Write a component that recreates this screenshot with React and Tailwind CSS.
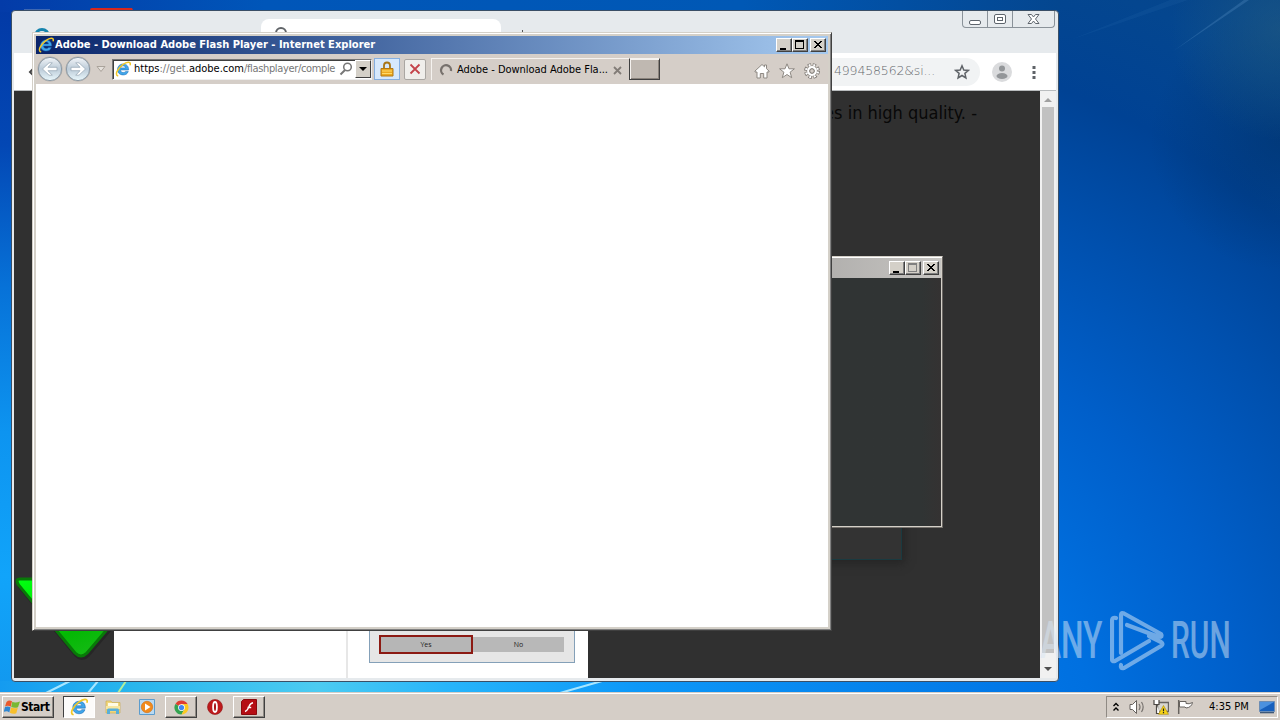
import clsx from 'clsx';

const IeLogo = ({ className }) => (
  <svg viewBox="0 0 16 16" className={className}>
    <path d="M13.6 9H5.500C5.700 10.700 6.700 11.500 8.200 11.500c1.100 0 1.900-.4 2.300-1.100h2.800c-.7 2.200-2.600 3.600-5.200 3.600-3.300 0-5.600-2.200-5.600-5.500S4.900 2.900 8.100 2.900c3.500 0 5.700 2.400 5.500 6.100zM5.600 6.900h4.900C10.300 5.500 9.500 4.900 8.200 4.900S6 5.500 5.600 6.900z" fill="#3fa6ea" stroke="#1668b4" strokeWidth=".5" />
    <path d="M2.600 14.700C-.4 13.600 2.800 7.400 7.800 3.700 11.800.7 15.900.2 15.200 3.700" fill="none" stroke="#f1c727" strokeWidth="1.500" strokeLinecap="round" />
  </svg>
);

const NavArrow = ({ flip }) => (
  <svg viewBox="0 0 28 28" className={clsx('w-7 h-7 shrink-0', flip && '-scale-x-100')}>
    <defs>
      <linearGradient id="nav" x1="0" y1="0" x2="0" y2="1">
        <stop offset="0" stopColor="#f2f5f8" />
        <stop offset=".5" stopColor="#bccbd8" />
        <stop offset="1" stopColor="#eaf8fc" />
      </linearGradient>
    </defs>
    <circle cx="14" cy="14" r="12.500" fill="#b5b0ab" />
    <circle cx="14" cy="14" r="11.600" fill="url(#nav)" stroke="#8c9aa6" />
    <path d="M6.500 14l6.500-6.200h3.300L12 12.300h9v3.400h-9l4.300 4.500H13z" fill="#fff" stroke="#9aabb9" strokeWidth=".8" />
  </svg>
);

const ClassicButton = ({ kind, disabled }) => (
  <div className="w-4 h-[14px] bg-[#d4d0c8] border border-t-white border-l-white border-r-[#404040] border-b-[#404040] shadow-[inset_-1px_-1px_#808080]">
    <svg viewBox="0 0 14 12" className="block w-[14px] h-3" shapeRendering="crispEdges">
      {kind === 'min' && <path d="M3 9h6v2H3z" fill="#000" />}
      {kind === 'max' && <path d="M2 1h9v9H2zM3 3v6h7V3z" fillRule="evenodd" fill={disabled ? '#808080' : '#000'} />}
      {kind === 'close' && <path d="M3 2h2v1h1v1h2V3h1V2h2v1h-1v1H9v1H8v1h1v1h1v1h1v1H9V8H8V7H6v1H5v1H3V8h1V7h1V6h1V5H5V4H4V3H3z" fill="#000" />}
    </svg>
  </div>
);

const WindowButtons = ({ disabled }) => (
  <div className="flex items-center">
    <ClassicButton kind="min" />
    <ClassicButton kind="max" disabled={disabled} />
    <div className="w-[2px]" />
    <ClassicButton kind="close" />
  </div>
);

const Wallpaper = () => (
  <svg viewBox="0 0 1280 720" className="absolute inset-0 w-full h-full">
    <defs>
      <radialGradient id="glow" gradientUnits="userSpaceOnUse" cx="800" cy="760" r="900">
        <stop offset="0" stopColor="#0084f4" />
        <stop offset=".33" stopColor="#0070e0" />
        <stop offset=".5" stopColor="#005fca" />
        <stop offset=".66" stopColor="#0050ae" />
        <stop offset=".8" stopColor="#004294" />
        <stop offset=".92" stopColor="#04468f" />
        <stop offset="1" stopColor="#064488" />
      </radialGradient>
      <linearGradient id="left" x1="0" y1="0" x2="0" y2="1">
        <stop offset="0" stopColor="#0239a5" />
        <stop offset=".2" stopColor="#0347b4" />
        <stop offset=".4" stopColor="#0772d8" />
        <stop offset=".6" stopColor="#0d94f0" />
        <stop offset=".8" stopColor="#11a4fa" />
        <stop offset="1" stopColor="#1295ec" />
      </linearGradient>
      <linearGradient id="top">
        <stop offset="0" stopColor="#033ba8" />
        <stop offset=".25" stopColor="#0056b9" />
        <stop offset=".7" stopColor="#0058b5" />
        <stop offset="1" stopColor="#04468f" />
      </linearGradient>
      <linearGradient id="bottom">
        <stop offset="0" stopColor="#149bf0" />
        <stop offset=".12" stopColor="#28b5ed" />
        <stop offset=".3" stopColor="#4ccbf1" />
        <stop offset=".42" stopColor="#28b5fa" />
        <stop offset=".6" stopColor="#0d98f8" />
        <stop offset="1" stopColor="#0073e4" />
      </linearGradient>
      <radialGradient id="haze" gradientUnits="userSpaceOnUse" cx="1280" cy="30" r="110">
        <stop offset="0" stopColor="#2b6480" stopOpacity=".45" />
        <stop offset="1" stopColor="#2b6480" stopOpacity="0" />
      </radialGradient>
      <radialGradient id="shade" gradientUnits="userSpaceOnUse" cx="1280" cy="140" r="130">
        <stop offset="0" stopColor="#002f66" stopOpacity=".5" />
        <stop offset="1" stopColor="#002f66" stopOpacity="0" />
      </radialGradient>
    </defs>
    <path d="M0 0h1280v720H0z" fill="url(#glow)" />
    <path d="M0 0h600v720H0z" fill="url(#left)" />
    <path d="M0 0h1060v12H0z" fill="url(#top)" />
    <path d="M0 681h1060v14H0z" fill="url(#bottom)" />
    <path d="M1060 0h220v280h-220z" fill="url(#shade)" />
    <path d="M1060 0h220v180h-220z" fill="url(#haze)" />
    <path d="M1172 52L1244 0h5z" fill="#5a93c8" opacity=".3" />
    <path d="M1070 40L1170 0h18z" fill="#3c7dbc" opacity=".12" />
    <path d="M46 693L70 681M88 693l10-12M560 693l42-12" stroke="#a8e6ff" strokeWidth="2" />
    <path d="M118 693l8-12" stroke="#b4ee9c" strokeWidth="2" />
    <path d="M90 10q0-2 2-2h40l2 4H90z" fill="#d8281e" />
    <path d="M24 9.500h26V11H24z" fill="#7d93b8" />
  </svg>
);

const ChromeWindow = () => (
  <div className="absolute left-[11px] top-[10px] w-[1048px] h-[672px] flex flex-col bg-[#e6eaed] border border-[#3a4f66] rounded px-[2px] pb-[3px]">
    <div className="h-[42px] flex shrink-0">
      <div className="w-[247px] flex pl-5 pt-[17px]">
        <div className="w-4 h-4 rounded-full border-[3px] border-[#1583ad]" />
      </div>
      <div className="w-[240px] mt-2 bg-white rounded-t-lg pl-[14px] pt-2">
        <div className="w-3 h-3 rounded-full border-2 border-[#606468]" />
      </div>
      <div className="ml-[21px] mt-[19px] w-px h-3 bg-[#555]" />
      <div className="ml-auto mr-px flex h-[17px] w-[93px] border border-t-0 border-[#8a9299] rounded-b">
        <div className="w-[25px] border-r border-[#8a9299] flex justify-center pt-[9px]">
          <div className="w-3 h-[5px] border border-[#5e656d] rounded-[2px] bg-white" />
        </div>
        <div className="w-[25px] border-r border-[#8a9299] flex justify-center pt-[3px]">
          <div className="w-3 h-[10px] border border-[#5e656d] rounded-[2px] bg-white p-[2px]">
            <div className="w-full h-full border border-[#5e656d]" />
          </div>
        </div>
        <svg viewBox="0 0 41 16" className="w-[41px] h-4">
          <path d="M15 3.500h3.500l2 2.500 2-2.500H26L22.500 8l3.500 4.500h-3.500l-2-2.500-2 2.500H15L18.500 8z" fill="#fff" stroke="#5e656d" />
        </svg>
      </div>
    </div>
    <div className="h-[38px] shrink-0 flex items-center bg-white border-b border-[#b9bcbe]">
      <svg viewBox="0 0 8 8" className="w-2 h-2 ml-[14px]"><path d="M6 0L2 4l4 4" fill="none" stroke="#444" strokeWidth="2" /></svg>
      <div className="ml-[70px] w-[874px] h-7 rounded-full bg-[#f1f3f4] flex items-center justify-end pr-[10px]">
        <span className="font-['DejaVu_Sans'] font-extralight text-[12.500px] tracking-[-0.150px] text-[#66696e] mr-[19px] whitespace-nowrap">499458562&si...</span>
        <svg viewBox="0 0 16 16" className="w-4 h-4"><path d="M8 1.800l1.800 4.200 4.600.4-3.500 3 1 4.500L8 11.500l-3.900 2.400 1-4.500-3.500-3L6.200 6z" fill="none" stroke="#5f6368" strokeWidth="1.500" /></svg>
      </div>
      <svg viewBox="0 0 20 20" className="w-5 h-5 ml-3">
        <circle cx="10" cy="10" r="10" fill="#dadbdd" />
        <circle cx="10" cy="6.500" r="3" fill="#939699" />
        <ellipse cx="10" cy="14" rx="5.500" ry="3" fill="#939699" />
      </svg>
      <svg viewBox="0 0 4 14" className="w-1 h-[14px] ml-5"><path d="M.5 1h3v3h-3zM.5 6h3v3h-3zM.5 11h3v3h-3z" fill="#5f6368" /></svg>
    </div>
    <div className="flex-1 min-h-0 flex">
      <div className="relative w-[1026px] bg-[#303030] flex flex-col justify-between overflow-hidden">
        <p className="self-end mr-[63px] mt-[9px] font-['DejaVu_Sans_Condensed','DejaVu_Sans'] font-stretch-condensed text-[18px] leading-[26px] text-[#080808] whitespace-nowrap">See movies in high quality. -</p>
        <div className="absolute left-[600px] top-[400px] w-[288px] h-[69px] bg-[#333] border-r border-b border-[#1a3a40] shadow-[3px_4px_8px_#262626]" />
        <svg viewBox="0 0 100 110" className="absolute left-0 bottom-0 w-[100px] h-[110px]">
          <defs>
            <linearGradient id="green" x1=".1" x2=".6" y2="1">
              <stop offset="0" stopColor="#00ff10" />
              <stop offset=".5" stopColor="#05dc05" />
              <stop offset=".75" stopColor="#04b804" />
              <stop offset="1" stopColor="#12ba12" />
            </linearGradient>
          </defs>
          <path d="M7 14H92L97 60 74 87Q68 93 62 87L6 19Q3 13 8 13z" fill="none" stroke="#1c1c1c" strokeWidth="4" opacity=".5" />
          <path d="M6 11H92L96 58 73 85Q67 91 61 85L4.500 17Q1 11 6 11z" fill="url(#green)" stroke="#087a08" strokeWidth="3" />
        </svg>
        <div className="ml-[100px] h-[60px] w-[474px] bg-white flex">
          <div className="w-[232px]" />
          <div className="w-[2px] bg-[#e7e7e7]" />
          <div className="ml-[21px] h-[45px] w-[206px] bg-[#e6e6e6] border border-t-0 border-[#84a0b8] flex items-end pb-2 pl-[9px] text-center font-['Open_Sans'] text-[7px] text-[#222]">
            <div className="w-[94px] h-[19px] border-2 border-[#8c1a13] bg-[#b6b6b6] leading-[15px]">Yes</div>
            <div className="w-[91px] h-[15px] mb-[2px] bg-[#b8b8b8] leading-[15px]">No</div>
          </div>
        </div>
      </div>
      <div className="w-4 flex flex-col items-center bg-[#f1f1f1]">
        <svg viewBox="0 0 16 16" className="w-4 h-4"><path d="M4 11l4-4 4 4z" fill="#a0a0a0" /></svg>
        <div className="w-3 flex-1 bg-[#c1c1c1] mb-[9px]" />
        <svg viewBox="0 0 16 16" className="w-4 h-4"><path d="M4 5l4 4 4-4z" fill="#505050" /></svg>
      </div>
    </div>
  </div>
);

const DarkDialog = () => (
  <div className="absolute left-[543px] top-[256px] w-[400px] h-[272px] border border-[#d4d0c8] border-r-[#6a6663] border-b-[#77736e] bg-[#d4d0c8] shadow-[inset_1px_1px_#fff] p-px flex flex-col">
    <div className="h-[20px] shrink-0 bg-linear-to-r from-[#808080] to-[#c6c4c1] flex items-center justify-end pr-[2px]">
      <WindowButtons disabled />
    </div>
    <div className="flex-1 bg-linear-to-r from-[#303434] from-95% to-[#343232]" />
  </div>
);

const IeWindow = () => (
  <div className="absolute left-8 top-8 w-[800px] h-[599px] bg-[#d4d0c8] border border-[#d4d0c8] border-r-[#404040] border-b-[#404040] shadow-[inset_1px_1px_#fff,inset_-1px_-1px_#808080] p-[3px] flex flex-col font-['DejaVu_Sans_Condensed','DejaVu_Sans'] font-stretch-condensed text-[11px] text-black">
    <div className="h-[18px] shrink-0 flex items-center justify-between bg-linear-to-r from-[#0a246a] to-[#a6caf0] pl-[2px] pr-[2px]">
      <div className="flex items-center">
        <IeLogo className="w-4 h-4" />
        <span className="ml-px pt-px font-bold text-[11.050px] text-white whitespace-nowrap">Adobe - Download Adobe Flash Player - Internet Explorer</span>
      </div>
      <WindowButtons />
    </div>
    <div className="h-[30px] shrink-0 flex items-center bg-[#d5cec8]">
      <NavArrow />
      <NavArrow flip />
      <svg viewBox="0 0 10 8" className="w-[10px] h-2 ml-1"><path d="M1 1.500h8l-4 5z" fill="#e5e1dc" stroke="#aaa39b" /></svg>
      <div className="ml-[6px] w-[260px] h-[21px] border border-[#777] border-r-[#eee] border-b-[#eee] shadow-[inset_1px_1px_#404040] bg-white flex items-center pl-[2px]">
        <IeLogo className="w-4 h-4 shrink-0" />
        <div className="ml-[3px] w-[203px] pt-px whitespace-nowrap text-[#777]">
          <span className="text-black">https</span>://get.<span className="text-black">adobe.com</span><span className="tracking-[-0.350px]">/flashplayer/comple</span>
        </div>
        <svg viewBox="0 0 14 14" className="w-[14px] h-[14px] ml-[3px] shrink-0"><circle cx="8.500" cy="5" r="3.800" fill="none" stroke="#777" strokeWidth="1.500" /><path d="M6 8l-4.500 4.500" stroke="#777" strokeWidth="2" /></svg>
        <div className="ml-[2px] w-[16px] h-[18px] shrink-0 bg-[#d4d0c8] border border-t-white border-l-white border-r-[#404040] border-b-[#404040] flex items-center justify-center">
          <svg viewBox="0 0 8 4" className="w-2 h-1"><path d="M0 0h8L4 4z" /></svg>
        </div>
      </div>
      <div className="ml-[2px] w-[26px] h-[22px] bg-[#d6e8fc] border border-[#86afe0] flex items-center justify-center">
        <svg viewBox="0 0 14 16" className="w-[14px] h-4">
          <path d="M4 8V4.500a3 3 0 016 0V8" fill="none" stroke="#a87515" strokeWidth="1.800" />
          <path d="M1 7.500h12V15H1z" fill="#eda920" stroke="#b27814" />
          <path d="M2 10h10M2 12.500h10" stroke="#ffda6b" />
        </svg>
      </div>
      <div className="ml-1 w-[22px] h-[21px] bg-[#f0eeeb] border border-[#aaa6a2] rounded-[2px] flex items-center justify-center">
        <svg viewBox="0 0 12 12" className="w-3 h-3"><path d="M1.500 1.500l9 9M10.500 1.500l-9 9" stroke="#c4434a" strokeWidth="1.800" /></svg>
      </div>
      <div className="ml-[5px] w-[198px] h-[22px] border-t border-l border-[#f5f2ef] flex items-center pl-[7px]">
        <svg viewBox="0 0 14 14" className="w-[14px] h-[14px] shrink-0"><path d="M4.500 11.500A5 5 0 1112 8" fill="none" stroke="#77716d" strokeWidth="2.300" /></svg>
        <span className="ml-[4px] pt-px whitespace-nowrap tracking-[-0.030px]">Adobe - Download Adobe Fla...</span>
        <svg viewBox="0 0 9 9" className="w-[9px] h-[9px] ml-[5px] mt-px shrink-0"><path d="M1 1l7 7M8 1L1 8" stroke="#827c77" strokeWidth="1.800" /></svg>
      </div>
      <div className="w-[31px] h-[22px] bg-[#bfb8b1] border border-[#404040] border-t-[#f5f2ef] shadow-[inset_1px_1px_#f5f2ef,inset_-1px_-1px_#8a837c]" />
      <div className="ml-auto mr-[8px] mt-[3px] flex gap-[9px] items-center">
        <svg viewBox="0 0 16 16" className="w-4 h-4"><path d="M1 8l7-6.500 2.500 2.300V2h2v3.700L15 8v1h-2v6H9.700v-4.500H6.300V15H3V9H1z" fill="#fff" stroke="#8d8882" /></svg>
        <svg viewBox="0 0 16 16" className="w-4 h-4"><path d="M8 .8l2 5h5.400l-4.300 3.400 1.600 5.500L8 11.500l-4.700 3.200 1.600-5.500L.6 5.800H6z" fill="#fff" stroke="#8d8882" /></svg>
        <svg viewBox="0 0 16 16" className="w-4 h-4">
          <circle cx="8" cy="8" r="6.300" fill="none" stroke="#7d7873" strokeWidth="3.200" strokeDasharray="3.200 1.750" />
          <circle cx="8" cy="8" r="5.600" fill="#8d8882" />
          <circle cx="8" cy="8" r="3.700" fill="none" stroke="#fff" strokeWidth="2.400" />
          <circle cx="8" cy="8" r="6" fill="none" stroke="#fff" strokeWidth="2.200" strokeDasharray="1.800 2.910" strokeDashoffset="-.7" />
          <circle cx="8" cy="8" r="2.300" fill="#d5cec8" stroke="#7d7873" />
        </svg>
      </div>
    </div>
    <div className="flex-1 bg-white" />
  </div>
);

const TaskButton = ({ open, active, children }) => (
  <div className={clsx(
    'h-[22px] w-8 flex items-center justify-center',
    open && !active && 'border border-t-white border-l-white border-r-[#404040] border-b-[#404040] shadow-[inset_-1px_-1px_#8f8a84]',
    active && 'bg-[#fcfbfa] border border-t-[#404040] border-l-[#404040] border-r-white border-b-white',
  )}>
    {children}
  </div>
);

const Taskbar = () => (
  <div className="absolute left-0 bottom-0 w-full h-[28px] bg-[#d5cec7] border-t border-[#d5cec7] shadow-[inset_0_1px_#fff] flex items-center pl-[2px] pt-px font-['DejaVu_Sans_Condensed','DejaVu_Sans'] font-stretch-condensed text-[11px] text-black">
    <div className="w-[52px] h-[22px] border border-t-white border-l-white border-r-[#404040] border-b-[#404040] shadow-[inset_-1px_-1px_#8f8a84] flex items-center pl-px">
      <svg viewBox="0 0 16 16" className="w-4 h-4 shrink-0">
        <path d="M2.500 3Q5 .5 8 2.300L6.700 7.700Q4 6 1 7.500z" fill="#e9592b" />
        <path d="M8.300 2.800Q11 4.500 16 2.500L14 8.200Q10.500 9.500 7.200 8z" fill="#78b833" />
        <path d="M1 8Q3.500 6.700 6.500 8.200L5.300 13.500Q3 11.500 -.300 13z" fill="#2e86d1" />
        <path d="M7 8.500Q10.500 10 13.800 8.800L12.300 14.200Q9 15.500 5.900 13.800z" fill="#f8bf2b" />
      </svg>
      <span className="pl-px font-bold text-[12px] tracking-[-0.450px]">Start</span>
    </div>
    <div className="ml-[9px] flex gap-[2px]">
      <TaskButton open active><IeLogo className="w-[18px] h-[18px]" /></TaskButton>
      <TaskButton>
        <svg viewBox="0 0 16 16" className="w-4 h-4">
          <path d="M1 2h5l1 1.500h8V14H1z" fill="#f0d67c" stroke="#c9a947" strokeWidth=".6" />
          <path d="M3 4h10v5H3z" fill="#fffbe4" />
          <path d="M1 7h14v3H1z" fill="#f7e6a0" />
          <path d="M2 15v-4q0-1.500 1.500-1.500h9Q14 9.500 14 11v4h-3v-3H5v3z" fill="#59afd8" />
        </svg>
      </TaskButton>
      <TaskButton>
        <svg viewBox="0 0 16 16" className="w-4 h-4">
          <path d="M.5.500h15v15H.5z" fill="#b9d9f1" stroke="#5c9ccd" />
          <circle cx="8" cy="8" r="5.700" fill="#f18a1c" stroke="#d36c0b" strokeWidth=".6" />
          <path d="M6 4.500v7L11.500 8z" fill="#fff" />
        </svg>
      </TaskButton>
      <TaskButton open>
        <svg viewBox="0 0 16 16" className="w-[15px] h-[15px]">
          <path d="M8 8L1.500 4.200A7.500 7.500 0 0114.500 4.300H8z" fill="#df3d31" />
          <path d="M8 8L1.500 4.200A7.500 7.500 0 008 15.500L11 10z" fill="#34a350" />
          <path d="M8 15.500A7.500 7.500 0 0014.500 4.300H8L11 10z" fill="#fbc921" />
          <circle cx="8" cy="8" r="3.600" fill="#fff" />
          <circle cx="8" cy="8" r="2.800" fill="#4286f0" />
        </svg>
      </TaskButton>
      <TaskButton>
        <svg viewBox="0 0 16 16" className="w-4 h-4">
          <circle cx="8" cy="8" r="7.500" fill="#be1a1c" stroke="#8e1012" strokeWidth=".6" />
          <ellipse cx="8" cy="8" rx="1.900" ry="5" fill="#a81416" stroke="#fff" strokeWidth="1.800" />
        </svg>
      </TaskButton>
      <TaskButton open>
        <svg viewBox="0 0 16 16" className="w-4 h-4">
          <path d="M.5 2.500l2-2h13v15H.5z" fill="#b60e14" stroke="#8a0a0e" />
          <path d="M4 12.500c2-.5 3-2.500 4-5s2-3.500 4-3.800M6.500 8.500h3.700" fill="none" stroke="#fff" strokeWidth="1.400" />
        </svg>
      </TaskButton>
    </div>
    <div className="ml-auto mr-[2px] w-[172px] h-[22px] border border-[#8f8a84] border-r-white border-b-white flex items-center pl-[5px]">
      <svg viewBox="0 0 8 10" className="w-2 h-[10px]"><path d="M1.500 4L4 1.500 6.500 4M1.500 8.500L4 6l2.500 2.500" fill="none" stroke="#000" strokeWidth="1.400" /></svg>
      <svg viewBox="0 0 16 16" className="w-4 h-4 ml-[9px]">
        <path d="M1 5.500h2.500l4-4v13l-4-4H1z" fill="#fff" stroke="#66625e" />
        <path d="M10 5q2 3 0 6M12.500 3q3.300 5 0 10" fill="none" stroke="#77736f" strokeWidth="1.200" />
      </svg>
      <svg viewBox="0 0 16 16" className="w-4 h-4 ml-2">
        <path d="M4.500 3.500h11v9h-11z" fill="#d8d6d0" stroke="#67635f" strokeWidth="1.400" />
        <path d="M1 1v4.500h5V1M3.500 5.500v9H7" fill="#fff" stroke="#4c4845" strokeWidth="1.200" />
        <path d="M10.500 6.500l5 8.800h-10z" fill="#f7d417" stroke="#aa8807" strokeWidth=".6" />
        <path d="M10.500 9.500v2.800M10.500 13v1.200" stroke="#222" strokeWidth="1.200" />
      </svg>
      <svg viewBox="0 0 16 16" className="w-4 h-4 ml-2">
        <path d="M2.500 2.500H9V4.500q3 1 6.500-1-1 5-6.500 5.500l-1-1H2.500z" fill="#fff" stroke="#67635f" />
        <path d="M1.700 1v14" stroke="#67635f" strokeWidth="1.500" />
      </svg>
      <span className="ml-[16px] pt-px w-[40px] whitespace-nowrap">4:35 PM</span>
      <svg viewBox="0 0 16 14" className="w-4 h-[14px] ml-[10px]">
        <path d="M.5 1.500h15v10H.5z" fill="#1760bd" stroke="#6c8db4" />
        <path d="M1 2h14L1 10z" fill="#4b91df" />
        <path d="M1 12h14v1.300H1z" fill="#3e5878" />
      </svg>
    </div>
  </div>
);

const Watermark = () => (
  <div className="absolute left-[1040px] top-[610px] h-[62px] w-[192px] flex items-center opacity-50 font-[Roboto] text-[52px] leading-none text-[#d8e6f4]">
    <div className="w-[70px]"><span className="inline-block origin-left font-medium scale-x-[.61]">ANY</span></div>
    <svg viewBox="0 0 56 62" className="w-14 h-[62px] shrink-0" fill="none" stroke="#dceaf8" strokeWidth="4.200" strokeLinejoin="round" strokeLinecap="round">
      <path d="M6 8Q2 7 2 11v38q0 3 3 2L39 31" />
      <path d="M11 43V5q0-3 3-1.500L51 24q2 3-2 3L17 15" />
      <path d="M39 26l12 6q3 2 0 4L14 58q-4 1-3-3" />
    </svg>
    <div className="ml-[5px]"><span className="inline-block origin-left font-medium scale-x-[.575]">RUN</span></div>
  </div>
);

const App = () => {
  return (
    <div className="relative w-[1280px] h-[720px] overflow-hidden bg-[#0056bd]">
      <Wallpaper />
      <ChromeWindow />
      <DarkDialog />
      <IeWindow />
      <Watermark />
      <Taskbar />
    </div>
  );
};

export default App;
